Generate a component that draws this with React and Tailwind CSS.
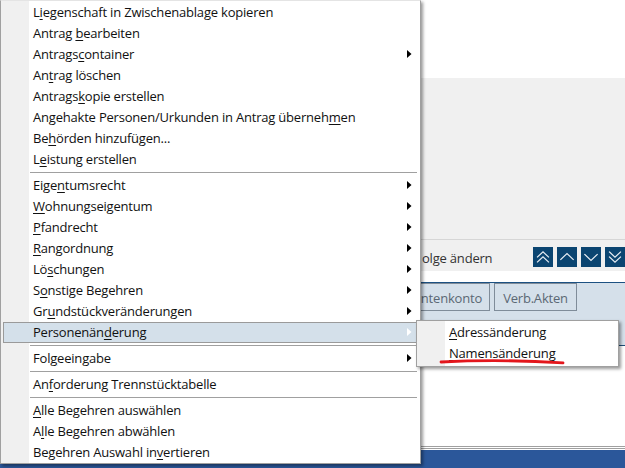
import React from "react";

const MENU = [
  ["L", "i", "egenschaft in Zwischenablage kopieren"],
  ["Antrag ", "b", "earbeiten"],
  ["Antrags", "c", "ontainer", true],
  ["An", "t", "rag löschen"],
  ["Antrags", "k", "opie erstellen"],
  ["Angehakte Personen/Urkunden in Antrag überneh", "m", "en"],
  ["Be", "h", "örden hinzufügen..."],
  ["L", "e", "istung erstellen"],
  "sep",
  ["Eige", "n", "tumsrecht", true],
  ["", "W", "ohnungseigentum", true],
  ["", "P", "fandrecht", true],
  ["", "R", "angordnung", true],
  ["Lö", "s", "chungen", true],
  ["S", "o", "nstige Begehren", true],
  ["Gr", "u", "ndstückveränderungen", true],
  ["Personenän", "d", "erung", true, true],
  "sep",
  ["Fol", "g", "eeingabe", true],
  "sep",
  ["An", "f", "orderung Trennstücktabelle"],
  "sep",
  ["", "A", "lle Begehren auswählen"],
  ["A", "l", "le Begehren abwählen"],
  ["Begehren Auswahl in", "v", "ertieren"],
];

function Arrow({ white }) {
  return (
    <svg width="5" height="8" viewBox="0 0 5 8" className="shrink-0">
      <polygon points="0,0 4.5,4 0,8" fill={white ? "#ffffff" : "#000000"} />
    </svg>
  );
}

function Label({ pre, u, post }) {
  return (
    <span className="whitespace-pre">
      {pre}
      <span className="underline decoration-1 underline-offset-[2px]">{u}</span>
      {post}
    </span>
  );
}

function Item({ pre, u, post, arrow, active }) {
  if (active) {
    return (
      <div className="mx-[2px] flex h-[21px] items-start border border-[#9a9a9a] bg-[#d4e0ea] pl-[29px] pr-[5px] leading-[19px]">
        <div className="flex-1">
          <Label pre={pre} u={u} post={post} />
        </div>
        {arrow && (
          <div className="mt-[5px]">
            <Arrow white />
          </div>
        )}
      </div>
    );
  }
  return (
    <div className="flex h-[21px] items-start pl-[32px] pr-[8px] leading-[21px]">
      <div className="flex-1">
        <Label pre={pre} u={u} post={post} />
      </div>
      {arrow && (
        <div className="mt-[6px]">
          <Arrow />
        </div>
      )}
    </div>
  );
}

function Sep() {
  return (
    <div className="h-[5px] pl-[29px] pr-[3px] pt-[2px]">
      <div className="h-px bg-[#a0a0a0]" />
    </div>
  );
}

function NavBtn({ children }) {
  return (
    <div className="flex h-[20px] w-[20px] shrink-0 items-center justify-center bg-[#0b4571]">
      <svg width="20" height="20" viewBox="0 0 20 20" fill="none" stroke="#e8eef4" strokeWidth="1.2" strokeLinecap="square">
        {children}
      </svg>
    </div>
  );
}

export default function App() {
  return (
    <div className="relative h-[468px] w-[625px] overflow-hidden bg-white font-['Open_Sans',sans-serif] text-[13px] tracking-[-0.2px] text-[#111]">
      {/* background page */}
      <div className="flex h-full flex-col">
        <div className="h-[78px] shrink-0 bg-white" />
        <div className="h-[161px] shrink-0 bg-[#f0f0f0]" />
        <div className="h-px shrink-0 bg-[#d6d6d6]" />
        <div className="flex h-[31px] shrink-0 items-start bg-[#f0f0f0] pl-[422px]">
          <div className="w-[113px] pt-[9px] leading-[19px] text-[#333]">olge ändern</div>
          <div className="flex gap-[4px] pt-[7px]">
            <NavBtn>
              <polyline points="4.5,10 10,4.8 15.5,10" />
              <polyline points="4.5,15 10,9.8 15.5,15" />
            </NavBtn>
            <NavBtn>
              <polyline points="3.8,12.5 10,6.5 16.2,12.5" />
            </NavBtn>
            <NavBtn>
              <polyline points="3.8,7.5 10,13.5 16.2,7.5" />
            </NavBtn>
            <NavBtn>
              <polyline points="4.5,5 10,10.2 15.5,5" />
              <polyline points="4.5,10 10,15.2 15.5,10" />
            </NavBtn>
          </div>
        </div>
        <div className="h-[11px] shrink-0 bg-white" />
        <div className="h-px shrink-0 bg-[#1c5182]" />
        <div className="flex h-[62px] shrink-0 items-start gap-[4px] bg-[#d5e0ea] pl-[390px]">
          <div className="flex h-[28px] w-[100px] justify-end border border-[#7f8c99] pr-[7px] pt-px leading-[26px] text-[#5b6874]">
            ntenkonto
          </div>
          <div className="flex h-[28px] w-[83px] justify-center border border-[#7f8c99] pt-px leading-[26px] text-[#5b6874]">
            Verb.Akten
          </div>
        </div>
        <div className="h-px shrink-0 bg-[#1f4e79]" />
        <div className="h-[100px] shrink-0 bg-white" />
        <div className="h-px shrink-0 bg-[#a0a0a0]" />
        <div className="h-px shrink-0 bg-white" />
        <div className="h-px shrink-0 bg-[#a0a0a0]" />
        <div className="h-px shrink-0 bg-white" />
        <div className="flex-1 bg-[#2b579a]" />
      </div>

      {/* context menu */}
      <div className="absolute left-0 top-0 w-[421px] border border-[#a0a0a0] border-t-[#e4e4e4] bg-[linear-gradient(to_right,#f0f0f0_28px,#ffffff_28px)] pt-px shadow-[2px_2px_3px_rgba(0,0,0,0.4)]">
        {MENU.map((m, i) =>
          m === "sep" ? (
            <Sep key={i} />
          ) : (
            <Item key={i} pre={m[0]} u={m[1]} post={m[2]} arrow={m[3]} active={m[4]} />
          )
        )}
      </div>

      {/* submenu */}
      <div className="absolute left-[416px] top-[320px] w-[203px] border border-[#a0a0a0] bg-[linear-gradient(to_right,#f0f0f0_28px,#ffffff_28px)] pb-[2px] pt-px shadow-[2px_2px_3px_rgba(0,0,0,0.4)]">
        <Item pre="" u="A" post="dressänderung" />
        <Item pre="" u="N" post="amensänderung" />
      </div>

      {/* red annotation underline */}
      <svg className="absolute left-[438px] top-[357px]" width="130" height="9" viewBox="0 0 130 9" fill="none">
        <path d="M3,5 Q62,2 125,5.8" stroke="#e3161c" strokeWidth="2.8" strokeLinecap="round" />
      </svg>
    </div>
  );
}
